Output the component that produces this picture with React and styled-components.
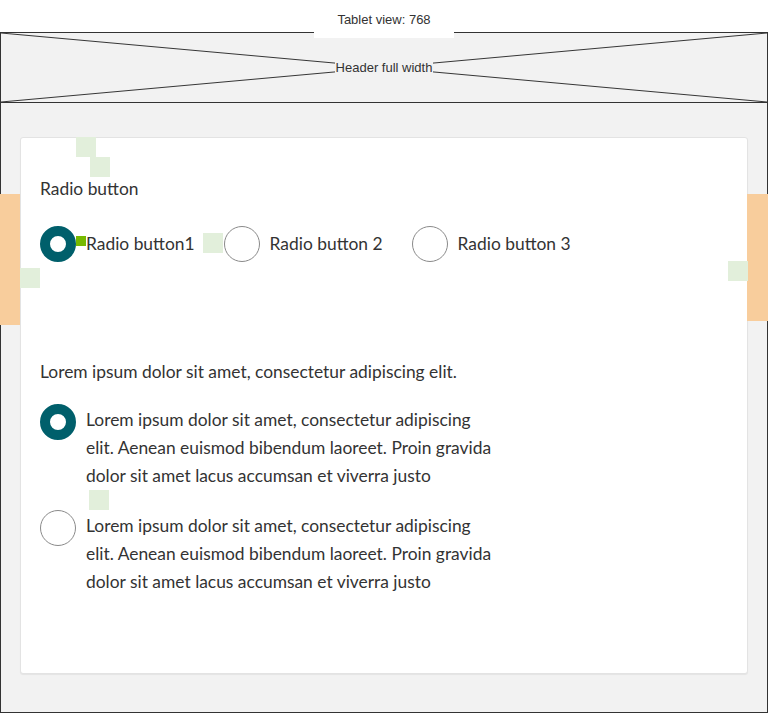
import React, { useState } from "react";
import styled, { createGlobalStyle } from "styled-components";

const GlobalStyle = createGlobalStyle`
  html, body {
    margin: 0;
    padding: 0;
    background: #ffffff;
  }
  * {
    box-sizing: border-box;
  }
`;

const Page = styled.div`
  position: relative;
  width: 768px;
  height: 713px;
  padding-top: 32px;
  display: flex;
  flex-direction: column;
  font-family: "Lato", "Liberation Sans", sans-serif;
  color: #333333;
`;

const ViewLabel = styled.div`
  position: absolute;
  top: 0;
  left: 314px;
  width: 140px;
  height: 38px;
  background: #ffffff;
  display: flex;
  align-items: center;
  justify-content: center;
  font-family: "Liberation Sans", Arial, sans-serif;
  font-size: 13px;
  color: #333333;
  z-index: 2;
`;

const Header = styled.div`
  position: relative;
  height: 71px;
  border: 1px solid #333333;
  background: #f2f2f2;
  display: flex;
  align-items: center;
  justify-content: center;
`;

const Cross = styled.svg`
  position: absolute;
  inset: 0;
  width: 100%;
  height: 100%;
`;

const HeaderText = styled.span`
  position: relative;
  background: #f2f2f2;
  font-family: "Liberation Sans", Arial, sans-serif;
  font-size: 13px;
  color: #333333;
  padding: 0 1px;
`;

const Body = styled.div`
  position: relative;
  flex: 1;
  border: 1px solid #333333;
  border-top: none;
  background: #f2f2f2;
  padding: 34px 19px 38px 19px;
  display: flex;
`;

const Card = styled.div`
  flex: 1;
  background: #ffffff;
  border: 1px solid #e3e3e3;
  border-radius: 3px;
  box-shadow: 0 1px 1px rgba(0, 0, 0, 0.06);
  padding: 39px 19px 20px 19px;
`;

const Group = styled.div`
  margin-top: ${(p) => p.$top || 0}px;
`;

const Legend = styled.div`
  font-size: 17.4px;
  line-height: 24px;
  margin-bottom: ${(p) => p.$gap}px;
`;

const Row = styled.div`
  display: flex;
  align-items: center;
  gap: 29px;
`;

const Column = styled.div`
  display: flex;
  flex-direction: column;
  gap: 20px;
`;

const Option = styled.label`
  display: flex;
  align-items: ${(p) => (p.$top ? "flex-start" : "center")};
  gap: 10px;
  cursor: pointer;
`;

const Circle = styled.span`
  flex: none;
  width: 36px;
  height: 36px;
  border-radius: 50%;
  background: #ffffff;
  border: ${(p) => (p.$checked ? "10px solid #005f6b" : "1px solid #8a8a8a")};
`;

const OptionText = styled.span`
  font-size: 17.4px;
  line-height: ${(p) => (p.$multi ? "28px" : "24px")};
  width: ${(p) => (p.$multi ? "412px" : "auto")};
  margin-top: ${(p) => (p.$multi ? "2px" : "0")};
`;

const SideBar = styled.div`
  position: absolute;
  top: ${(p) => p.$top}px;
  ${(p) => p.$side}: 0;
  width: ${(p) => p.$w}px;
  height: ${(p) => p.$h}px;
  background: #f8cd9c;
`;

const Marker = styled.div`
  position: absolute;
  left: ${(p) => p.$x}px;
  top: ${(p) => p.$y}px;
  width: ${(p) => p.$s || 20}px;
  height: ${(p) => p.$s || 20}px;
  background: ${(p) => (p.$strong ? "#76b900" : "#e2efdb")};
  z-index: 3;
`;

const lorem =
  "Lorem ipsum dolor sit amet, consectetur adipiscing elit. Aenean euismod bibendum laoreet. Proin gravida dolor sit amet lacus accumsan et viverra justo";

export default function App() {
  const [first, setFirst] = useState(0);
  const [second, setSecond] = useState(0);

  return (
    <>
      <GlobalStyle />
      <Page>
        <ViewLabel>Tablet view: 768</ViewLabel>
        <Header>
          <Cross viewBox="0 0 768 71" preserveAspectRatio="none">
            <line x1="0" y1="0" x2="768" y2="71" stroke="#333" strokeWidth="1" />
            <line x1="0" y1="71" x2="768" y2="0" stroke="#333" strokeWidth="1" />
          </Cross>
          <HeaderText>Header full width</HeaderText>
        </Header>
        <Body>
          <Card>
            <Group>
              <Legend $gap={25}>Radio button</Legend>
              <Row>
                {["Radio button1", "Radio button 2", "Radio button 3"].map((t, i) => (
                  <Option key={t} onClick={() => setFirst(i)}>
                    <Circle $checked={first === i} />
                    <OptionText>{t}</OptionText>
                  </Option>
                ))}
              </Row>
            </Group>
            <Group $top={98}>
              <Legend $gap={20}>Lorem ipsum dolor sit amet, consectetur adipiscing elit.</Legend>
              <Column>
                {[0, 1].map((i) => (
                  <Option key={i} $top onClick={() => setSecond(i)}>
                    <Circle $checked={second === i} />
                    <OptionText $multi>{lorem}</OptionText>
                  </Option>
                ))}
              </Column>
            </Group>
          </Card>
        </Body>
        <SideBar $side="left" $top={194} $w={20} $h={131} />
        <SideBar $side="right" $top={194} $w={21} $h={127} />
        <Marker $x={76} $y={137} />
        <Marker $x={90} $y={157} />
        <Marker $x={20} $y={268} />
        <Marker $x={203} $y={233} />
        <Marker $x={728} $y={261} />
        <Marker $x={89} $y={490} />
        <Marker $x={76} $y={236} $s={10} $strong />
      </Page>
    </>
  );
}
